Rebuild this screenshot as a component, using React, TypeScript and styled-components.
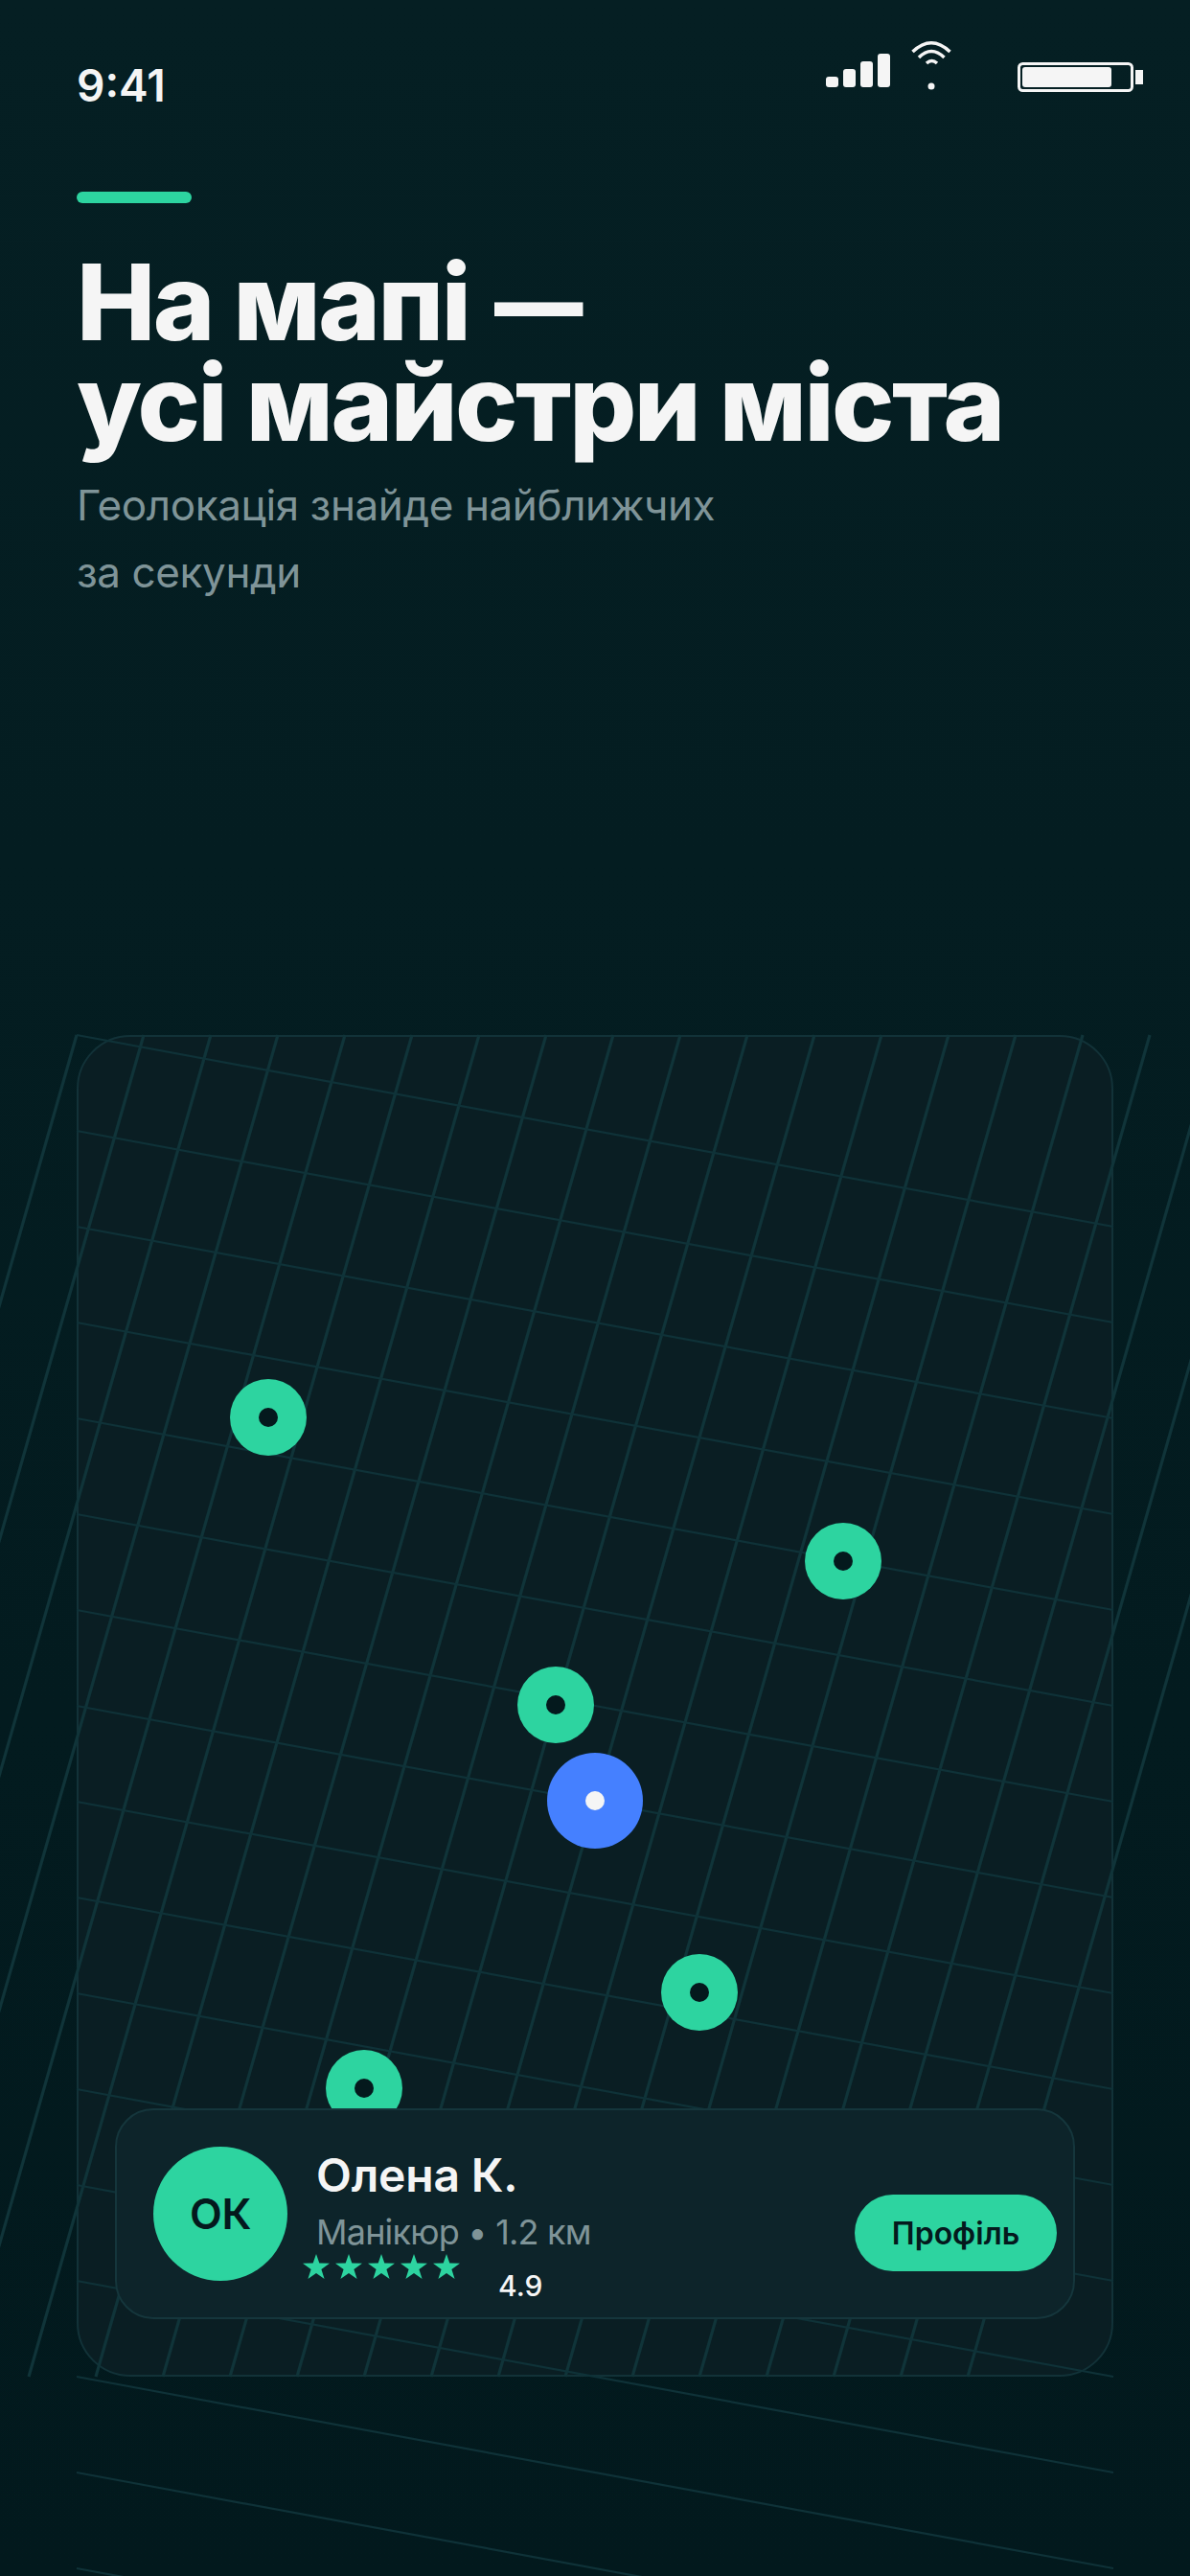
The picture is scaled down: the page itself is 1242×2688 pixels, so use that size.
import styled, { createGlobalStyle } from "styled-components";

const GlobalStyle = createGlobalStyle`
  html, body {
    margin: 0;
    padding: 0;
    background: #02191d;
  }
  * {
    box-sizing: border-box;
  }
`;

const pins = [
  { x: 160, y: 359 },
  { x: 760, y: 509 },
  { x: 460, y: 659 },
  { x: 610, y: 959 },
  { x: 260, y: 1059 },
];

const verticals = Array.from({ length: 20 }, (_, i) => i * 70);
const horizontals = Array.from({ length: 17 }, (_, i) => i * 100);

const StarIcon = () => (
  <svg width="28" height="26" viewBox="0 0 28 26">
    <polygon points="14,0 17.300,9.600 28,9.800 19.400,16 22.600,26 14,20 5.400,26 8.600,16 0,9.800 10.700,9.600" fill="#2dd4a0" />
  </svg>
);

const App = () => {
  return (
    <>
      <GlobalStyle />
      <Page>
        <StatusBar>
          <Time>9:41</Time>
          <SignalIcon width="67" height="35" viewBox="0 0 67 35">
            <rect x="0" y="24" width="13" height="11" rx="3" />
            <rect x="18" y="16" width="13" height="19" rx="3" />
            <rect x="36" y="8" width="13" height="27" rx="3" />
            <rect x="54" y="0" width="13" height="35" rx="3" />
          </SignalIcon>
          <WifiIcon width="44" height="52" viewBox="0 0 44 52">
            <path d="M2.500 12 Q22 -6.500 41.500 12" />
            <path d="M9 18 Q22 5 35.500 18" />
            <path d="M17 24 Q22.500 19 28 24" />
            <circle cx="22" cy="48" r="3.500" />
          </WifiIcon>
          <BatteryIcon width="131" height="31" viewBox="0 0 131 31">
            <rect className="shell" x="1.500" y="1.500" width="118" height="28" rx="4" />
            <rect x="5" y="5" width="93" height="21" rx="3" />
            <rect x="123" y="8" width="8" height="15" />
          </BatteryIcon>
        </StatusBar>
        <Accent />
        <Title>
          На мапі <Dash>—</Dash>
          <br />
          усі майстри міста
        </Title>
        <Subtitle>
          Геолокація знайде найближчих
          <br />
          за секунди
        </Subtitle>
        <MapCard>
          <GridLines width="1082" height="1400" viewBox="0 0 1082 1400">
            {verticals.map((x) => (
              <VerticalLine key={x} x1={x} y1={0} x2={x - 400} y2={1400} />
            ))}
            {horizontals.map((y) => (
              <HorizontalLine key={y} x1={0} y1={y} x2={1082} y2={y + 200} />
            ))}
          </GridLines>
          {pins.map((pin) => (
            <Pin key={pin.x} $x={pin.x} $y={pin.y} />
          ))}
          <UserPin />
          <InfoCard>
            <Avatar>ОК</Avatar>
            <Details>
              <Name>Олена К.</Name>
              <Meta>Манікюр • 1.2 км</Meta>
              <RatingRow>
                <Stars>
                  <StarIcon />
                  <StarIcon />
                  <StarIcon />
                  <StarIcon />
                  <StarIcon />
                </Stars>
                <Score>4.9</Score>
              </RatingRow>
            </Details>
            <ProfileButton>Профіль</ProfileButton>
          </InfoCard>
        </MapCard>
      </Page>
    </>
  );
};
export default App;

const Page = styled.div`
  width: 1242px;
  height: 2688px;
  padding: 0 80px;
  overflow: hidden;
  background: linear-gradient(180deg, #051f23 0%, #02191d 100%);
  font-family: Inter, "Noto Sans", sans-serif;
`;
const StatusBar = styled.div`
  display: flex;
  align-items: flex-start;
  height: 200px;
`;
const Time = styled.div`
  margin-top: 62px;
  margin-right: auto;
  font-size: 46px;
  line-height: 54px;
  font-weight: 600;
  color: #f5f5f5;
`;
const SignalIcon = styled.svg`
  margin-top: 56px;
  fill: #f5f5f5;
`;
const WifiIcon = styled.svg`
  margin-top: 42px;
  margin-left: 21px;
  fill: #f5f5f5;
  path {
    fill: none;
    stroke: #f5f5f5;
    stroke-width: 3.5;
  }
`;
const BatteryIcon = styled.svg`
  margin-top: 65px;
  margin-left: 68px;
  margin-right: -31px;
  fill: #f5f5f5;
  .shell {
    fill: none;
    stroke: #f5f5f5;
    stroke-width: 3;
  }
`;
const Accent = styled.div`
  width: 120px;
  height: 12px;
  border-radius: 6px;
  background: #2dd4a0;
`;
const Title = styled.h1`
  margin: 51px 0 0;
  font-size: 110px;
  line-height: 105px;
  font-weight: 800;
  letter-spacing: -2.5px;
  color: #f5f5f5;
`;
const Dash = styled.span`
  display: inline-block;
  margin-left: 5px;
  transform: scaleX(0.84);
  transform-origin: left center;
`;
const Subtitle = styled.p`
  margin: 19px 0 0;
  font-size: 44px;
  line-height: 70px;
  font-weight: 400;
  letter-spacing: -0.4px;
  color: #7f9498;
`;
const MapCard = styled.div`
  position: relative;
  width: 1082px;
  height: 1400px;
  margin-top: 448px;
  border: 2px solid #123238;
  border-radius: 56px;
  background: #0a1e23;
`;
const GridLines = styled.svg`
  position: absolute;
  left: -2px;
  top: -2px;
  overflow: visible;
`;
const VerticalLine = styled.line`
  stroke: #103439;
  stroke-width: 3.2;
`;
const HorizontalLine = styled.line`
  stroke: #0f3238;
  stroke-width: 2.2;
`;
const Pin = styled.div<{ $x: number; $y: number }>`
  position: absolute;
  left: ${({ $x }) => $x - 2}px;
  top: ${({ $y }) => $y - 2}px;
  width: 80px;
  height: 80px;
  border-radius: 50%;
  background: #2dd4a0;
  &::after {
    content: "";
    position: absolute;
    left: 30px;
    top: 30px;
    width: 20px;
    height: 20px;
    border-radius: 50%;
    background: #04191d;
  }
`;
const UserPin = styled.div`
  position: absolute;
  left: 489px;
  top: 747px;
  width: 100px;
  height: 100px;
  border-radius: 50%;
  background: #4580ff;
  &::after {
    content: "";
    position: absolute;
    left: 40px;
    top: 40px;
    width: 20px;
    height: 20px;
    border-radius: 50%;
    background: #f5f5f5;
  }
`;
const InfoCard = styled.div`
  position: absolute;
  left: 38px;
  bottom: 58px;
  display: flex;
  align-items: center;
  width: 1002px;
  height: 220px;
  padding: 0 17px 0 38px;
  border: 2px solid #15363c;
  border-radius: 40px;
  background: #0d242a;
`;
const Avatar = styled.div`
  display: flex;
  align-items: center;
  justify-content: center;
  flex: none;
  width: 140px;
  height: 140px;
  border-radius: 50%;
  background: #2dd4a0;
  font-size: 44px;
  font-weight: 600;
  letter-spacing: -0.5px;
  color: #04191d;
`;
const Details = styled.div`
  display: flex;
  flex-direction: column;
  align-self: flex-start;
  margin: 39px auto 0 30px;
`;
const Name = styled.div`
  font-size: 48px;
  line-height: 58px;
  font-weight: 600;
  letter-spacing: -0.2px;
  color: #f5f5f5;
`;
const Meta = styled.div`
  margin-top: 8px;
  font-size: 36px;
  line-height: 44px;
  letter-spacing: -0.8px;
  color: #7f9498;
`;
const RatingRow = styled.div`
  display: flex;
  align-items: flex-start;
  margin-left: -14px;
  margin-top: 1px;
`;
const Stars = styled.div`
  display: flex;
  gap: 6px;
`;
const Score = styled.div`
  margin-top: 15px;
  margin-left: 40px;
  font-size: 30px;
  line-height: 36px;
  font-weight: 500;
  color: #f5f5f5;
`;
const ProfileButton = styled.button`
  flex: none;
  width: 211px;
  height: 80px;
  margin-top: 40px;
  padding: 0;
  border: none;
  border-radius: 40px;
  background: #2dd4a0;
  font-family: inherit;
  font-size: 32px;
  font-weight: 600;
  color: #04191d;
`;
